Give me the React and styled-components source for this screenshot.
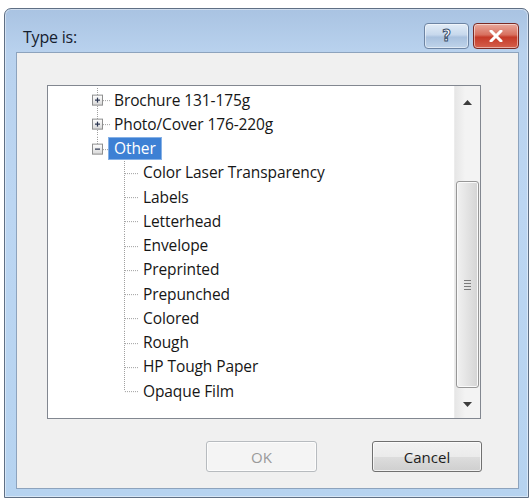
import React from 'react';
import styled, { createGlobalStyle } from 'styled-components';

const GlobalStyle = createGlobalStyle`
    html, body {
        margin: 0;
        padding: 0;
        background: #ffffff;
    }
    body {
        font-family: 'Open Sans', 'Noto Sans', 'DejaVu Sans', sans-serif;
    }
`;

const ROW_H = 24.25;

const items = [
    'Color Laser Transparency',
    'Labels',
    'Letterhead',
    'Envelope',
    'Preprinted',
    'Prepunched',
    'Colored',
    'Rough',
    'HP Tough Paper',
    'Opaque Film',
];

function Expander({ open }) {
    const m = ROW_H / 2;
    return (
        <svg width="62" height={ROW_H}>
            <line x1="49.5" y1="0" x2="49.5" y2={open ? m : ROW_H} stroke="#a0a0a0" strokeDasharray="1 1" />
            <line x1="55" y1={m + 0.5} x2="62" y2={m + 0.5} stroke="#a0a0a0" strokeDasharray="1 1" />
            <defs>
                <linearGradient id="xb" x1="0" y1="0" x2="0" y2="1">
                    <stop offset="0" stopColor="#ffffff" />
                    <stop offset="1" stopColor="#d8d8d8" />
                </linearGradient>
            </defs>
            <rect x="44.5" y={m - 5} width="10" height="10" fill="url(#xb)" stroke="#8e8f8f" />
            <line x1="47" y1={m} x2="52" y2={m} stroke="#2a3550" strokeWidth="1.2" />
            {!open && <line x1="49.5" y1={m - 2.5} x2="49.5" y2={m + 2.5} stroke="#2a3550" strokeWidth="1.2" />}
        </svg>
    );
}

function Branch({ last }) {
    const m = ROW_H / 2;
    return (
        <svg width="91" height={ROW_H}>
            <line x1="76.5" y1="0" x2="76.5" y2={last ? m : ROW_H} stroke="#a0a0a0" strokeDasharray="1 1" />
            <line x1="77" y1={m + 0.5} x2="91" y2={m + 0.5} stroke="#a0a0a0" strokeDasharray="1 1" />
        </svg>
    );
}

export default function App() {
    return (
        <Page>
            <GlobalStyle />
            <Window>
                <TitleBar>
                    <Title>Type is:</Title>
                    <Caption>
                        <CapButton>
                            <HelpGlyph>?</HelpGlyph>
                        </CapButton>
                        <CapButton $close>
                            <svg width="14" height="12" viewBox="0 0 14 12">
                                <path d="M2 1 L12 11 M12 1 L2 11" stroke="#ffffff" strokeWidth="3" strokeLinecap="round" />
                            </svg>
                        </CapButton>
                    </Caption>
                </TitleBar>
                <Client>
                    <TreeBox>
                        <TreeList>
                            <Row>
                                <Expander />
                                <Label>Brochure 131-175g</Label>
                            </Row>
                            <Row>
                                <Expander />
                                <Label>Photo/Cover 176-220g</Label>
                            </Row>
                            <Row>
                                <Expander open />
                                <Label $selected>Other</Label>
                            </Row>
                            {items.map((t, i) => (
                                <Row key={t}>
                                    <Branch last={i === items.length - 1} />
                                    <Label>{t}</Label>
                                </Row>
                            ))}
                        </TreeList>
                        <ScrollBar>
                            <Arrow $h={32}>
                                <svg width="9" height="5"><path d="M0 5 L4.5 0 L9 5 Z" fill="#3c3c3c" /></svg>
                            </Arrow>
                            <Track>
                                <Thumb>
                                    <Grip />
                                    <Grip />
                                    <Grip />
                                    <Grip />
                                </Thumb>
                            </Track>
                            <Arrow $h={28}>
                                <svg width="9" height="5"><path d="M0 0 L4.5 5 L9 0 Z" fill="#3c3c3c" /></svg>
                            </Arrow>
                        </ScrollBar>
                    </TreeBox>
                    <Buttons>
                        <Button disabled>OK</Button>
                        <Button>Cancel</Button>
                    </Buttons>
                </Client>
            </Window>
        </Page>
    );
}

const Page = styled.div`
    padding: 8px 2px 3px 4px;
    width: 531px;
    height: 501px;
    box-sizing: border-box;
`;

const Window = styled.div`
    width: 525px;
    height: 490px;
    box-sizing: border-box;
    border: 1px solid #5f6f84;
    border-radius: 7px 7px 0 0;
    background: linear-gradient(180deg, #a9c3e2 0%, #b9d2ee 9%, #bcd6f2 40%, #b6d3f0 100%);
    padding: 0 9px 8px 11px;
    display: flex;
    flex-direction: column;
    box-shadow: inset 0 0 0 1px rgba(255, 255, 255, 0.45);
`;

const TitleBar = styled.div`
    height: 43px;
    display: flex;
    align-items: center;
    justify-content: space-between;
    padding-left: 7px;
    flex-shrink: 0;
`;

const Title = styled.div`
    font-size: 16px;
    color: #15202e;
    margin-top: 12px;
    letter-spacing: -0.2px;
`;

const Caption = styled.div`
    display: flex;
    gap: 4px;
    align-self: flex-start;
    margin-top: 14px;
`;

const CapButton = styled.div`
    width: ${(p) => (p.$close ? 46 : 45)}px;
    height: 26px;
    box-sizing: border-box;
    border: 1px solid ${(p) => (p.$close ? '#7a2a24' : '#6d84a3')};
    border-radius: 4px;
    display: flex;
    align-items: center;
    justify-content: center;
    background: ${(p) =>
        p.$close
            ? 'linear-gradient(180deg, #e9a99c 0%, #d8705f 45%, #c53a28 55%, #d5604c 100%)'
            : 'linear-gradient(180deg, #e2ecf7 0%, #c7d8ec 45%, #a9c1de 55%, #c0d4ea 100%)'};
    box-shadow: inset 0 0 0 1px rgba(255, 255, 255, 0.5);
`;

const HelpGlyph = styled.span`
    font-family: 'DejaVu Sans', sans-serif;
    font-weight: bold;
    font-size: 15px;
    color: #ffffff;
    -webkit-text-stroke: 1px #3b4f6b;
    line-height: 1;
`;

const Client = styled.div`
    flex: 1;
    background: #f0f0f0;
    border: 1px solid #8da3bd;
    padding: 32px 37px 0 30px;
    display: flex;
    flex-direction: column;
`;

const TreeBox = styled.div`
    height: 334px;
    box-sizing: border-box;
    border: 1px solid #828790;
    background: #ffffff;
    display: flex;
`;

const TreeList = styled.div`
    flex: 1;
    padding-top: 2px;
    overflow: hidden;
`;

const Row = styled.div`
    height: ${ROW_H}px;
    display: flex;
    align-items: center;
    svg {
        flex-shrink: 0;
        display: block;
    }
`;

const Label = styled.span`
    font-size: 15.5px;
    line-height: 21px;
    padding: 0 ${(p) => (p.$selected ? '5px' : '3px')};
    margin-left: ${(p) => (p.$selected ? '-2px' : '0')};
    color: ${(p) => (p.$selected ? '#ffffff' : '#161616')};
    background: ${(p) => (p.$selected ? '#3d80d4' : 'transparent')};
    border: 1px solid ${(p) => (p.$selected ? '#86b1e6' : 'transparent')};
    white-space: nowrap;
    letter-spacing: -0.1px;
`;

const ScrollBar = styled.div`
    width: 25px;
    display: flex;
    flex-direction: column;
    background: linear-gradient(90deg, #e6e6e6 0%, #f3f3f3 40%, #f3f3f3 100%);
    border-left: 1px solid #ececec;
`;

const Arrow = styled.div`
    height: ${(p) => p.$h}px;
    flex-shrink: 0;
    display: flex;
    align-items: center;
    justify-content: center;
`;

const Track = styled.div`
    flex: 1;
    padding: 63px 1px 2px 1px;
    display: flex;
`;

const Thumb = styled.div`
    flex: 1;
    border: 1px solid #979797;
    border-radius: 3px;
    background: linear-gradient(90deg, #f1f1f1 0%, #e3e3e3 50%, #d4d4d4 100%);
    box-shadow: inset 0 0 0 1px #fafafa;
    display: flex;
    flex-direction: column;
    align-items: center;
    justify-content: center;
    gap: 2px;
`;

const Grip = styled.div`
    width: 7px;
    height: 1px;
    background: #7b7b7b;
`;

const Buttons = styled.div`
    display: flex;
    justify-content: flex-end;
    gap: 55px;
    margin-top: 22px;
    margin-right: -1px;
`;

const Button = styled.button`
    width: ${(p) => (p.disabled ? 111 : 110)}px;
    height: 31px;
    box-sizing: border-box;
    border-radius: 3px;
    font-family: 'Open Sans', 'Noto Sans', sans-serif;
    font-size: 15px;
    padding: 0;
    border: 1px solid ${(p) => (p.disabled ? '#b7bbbf' : '#707070')};
    color: ${(p) => (p.disabled ? '#9a9a9a' : '#1e1e1e')};
    background: ${(p) =>
        p.disabled
            ? '#f4f4f4'
            : 'linear-gradient(180deg, #f2f2f2 0%, #ebebeb 50%, #dddddd 51%, #cfcfcf 100%)'};
    box-shadow: inset 0 0 0 1px rgba(255, 255, 255, 0.7);
`;
